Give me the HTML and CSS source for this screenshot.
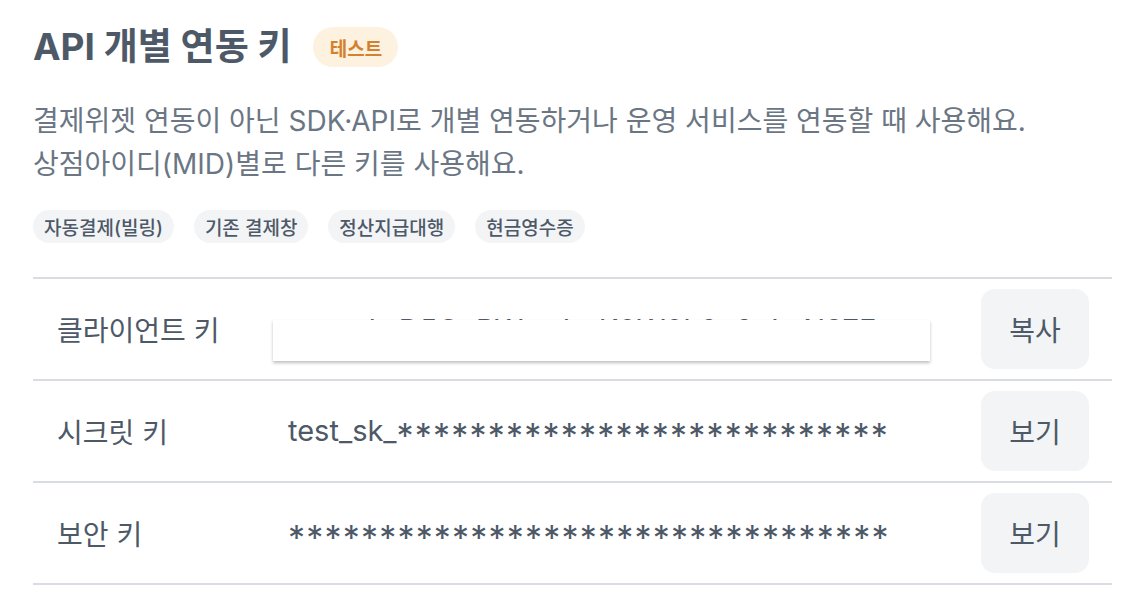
FILE: index.html
```html
<!DOCTYPE html>
<html lang="ko">
<head>
<meta charset="utf-8">
<link rel="stylesheet" href="styles.css">
</head>
<body>
<div class="page">
  <div class="title-row">
    <h1 class="title">API 개별 연동 키</h1>
    <span class="badge">테스트</span>
  </div>
  <p class="desc">결제위젯 연동이 아닌 SDK·API로 개별 연동하거나 운영 서비스를 연동할 때 사용해요.<br>상점아이디(MID)별로 다른 키를 사용해요.</p>
  <div class="chips">
    <span class="chip">자동결제(빌링)</span>
    <span class="chip">기존 결제창</span>
    <span class="chip">정산지급대행</span>
    <span class="chip">현금영수증</span>
  </div>
  <div class="table">
    <div class="row">
      <div class="label">클라이언트 키</div>
      <div class="value">
        <span class="key key-hidden">test_ck_D5GePWvyJnrK0W0k6q8gLzN97Eoq</span>
        <div class="overlay"></div>
      </div>
      <button class="btn">복사</button>
    </div>
    <div class="row">
      <div class="label">시크릿 키</div>
      <div class="value"><span class="key">test_sk_<span class="mask">***************************</span></span></div>
      <button class="btn">보기</button>
    </div>
    <div class="row">
      <div class="label">보안 키</div>
      <div class="value"><span class="key"><span class="mask">*********************************</span></span></div>
      <button class="btn">보기</button>
    </div>
  </div>
</div>
</body>
</html>
```

FILE: styles.css
```css
* { box-sizing: border-box; }
html, body { margin: 0; padding: 0; background: #ffffff; }
body {
  font-family: Inter, "Noto Sans CJK KR", sans-serif;
  color: #4e5968;
}
.page {
  padding: 27px 26px 0 33px;
}
.title-row {
  display: flex;
  align-items: center;
  gap: 22px;
  height: 40px;
}
.title {
  margin: 0;
  font-size: 37px;
  font-weight: 700;
  color: #4e5968;
  line-height: 40px;
}
.badge {
  display: inline-flex;
  align-items: center;
  justify-content: center;
  width: 85px;
  height: 40px;
  border-radius: 20px;
  background: #fdf2e0;
  color: #d4802c;
  font-size: 19px;
  font-weight: 700;
}
.desc {
  margin: 33px 0 0;
  font-size: 28px;
  line-height: 43px;
  color: #6b7684;
}
.chips {
  display: flex;
  gap: 20px;
  margin-top: 24px;
}
.chip {
  display: inline-flex;
  align-items: center;
  height: 33px;
  padding: 0 11px;
  border-radius: 17px;
  background: #f2f4f6;
  color: #4e5968;
  font-size: 19px;
  font-weight: 500;
}
.table {
  margin-top: 34px;
  border-top: 2px solid #d9dde2;
}
.row {
  display: flex;
  align-items: center;
  height: 102px;
  padding: 0 23px 0 24px;
  border-bottom: 2px solid #d9dde2;
}
.label {
  width: 231px;
  font-size: 28px;
  color: #4e5968;
}
.value {
  position: relative;
  flex: 1;
  font-size: 29px;
  line-height: 36px;
  color: #4e5968;
  white-space: nowrap;
}
.key-hidden {
  display: inline-block;
  padding-top: 2px;
}
.mask {
  font-size: 34px;
  line-height: 0;
  letter-spacing: 1.2px;
  vertical-align: -0.2em;
}
.overlay {
  position: absolute;
  left: -15px;
  top: 10px;
  width: 657px;
  height: 41px;
  background: #ffffff;
  box-shadow: 0 2px 3px rgba(0, 0, 0, 0.25);
}
.btn {
  width: 108px;
  height: 80px;
  border: none;
  border-radius: 14px;
  background: #f2f4f6;
  color: #4e5968;
  font-family: Inter, "Noto Sans CJK KR", sans-serif;
  font-size: 28px;
  padding: 0;
}
```
